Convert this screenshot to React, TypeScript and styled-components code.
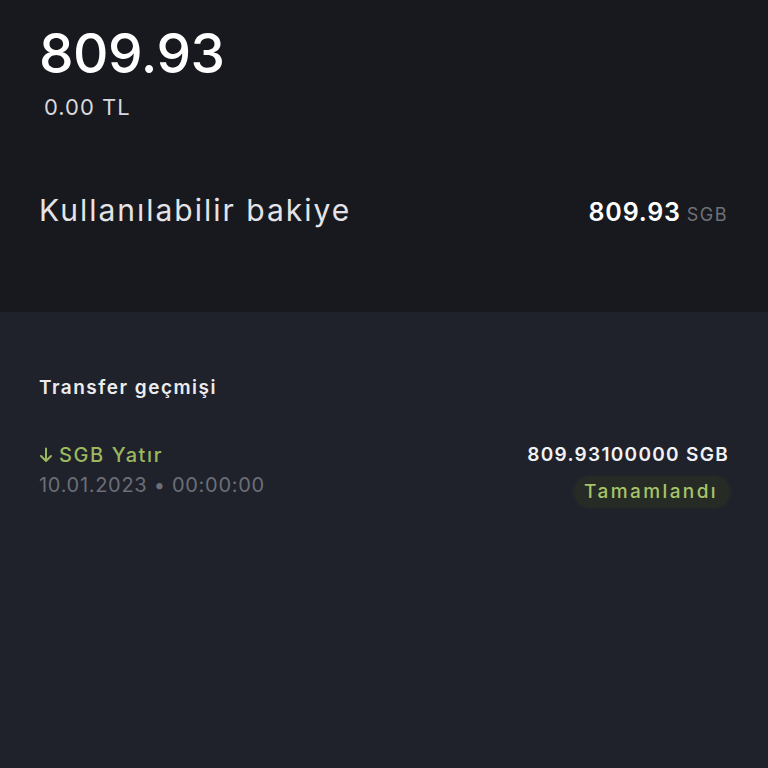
import React from 'react';
import styled, { createGlobalStyle } from 'styled-components';

const Global = createGlobalStyle`
  html, body {
    margin: 0;
    padding: 0;
    background: #1f222b;
  }
  body {
    font-family: Inter, "Noto Sans", sans-serif;
    -webkit-font-smoothing: antialiased;
  }
`;

const Page = styled.div`
  width: 768px;
  height: 768px;
  display: flex;
  flex-direction: column;
  overflow: hidden;
`;

const Header = styled.div`
  height: 312px;
  background: #18191e;
  padding: 0 40px 0 39px;
  box-sizing: border-box;
  display: flex;
  flex-direction: column;
`;

const Total = styled.div`
  margin-top: 22px;
  font-size: 55px;
  font-weight: 500;
  color: #ffffff;
  line-height: 62px;
  letter-spacing: -0.5px;
`;

const Fiat = styled.div`
  margin: 10px 0 0 5px;
  font-size: 22px;
  color: #d8d8dc;
  line-height: 26px;
  letter-spacing: 1px;
`;

const BalanceRow = styled.div`
  margin-top: 72px;
  display: flex;
  justify-content: space-between;
  align-items: baseline;
  line-height: 36px;
`;

const BalanceLabel = styled.span`
  font-size: 30px;
  color: #e4e4e8;
  letter-spacing: 2px;
`;

const BalanceValue = styled.span`
  font-size: 25px;
  font-weight: 600;
  color: #ffffff;
  letter-spacing: 0.8px;
`;

const Unit = styled.span`
  margin-left: 6px;
  font-size: 18px;
  font-weight: 400;
  color: #6f7178;
  letter-spacing: 1.5px;
`;

const History = styled.div`
  flex: 1;
  padding: 0 40px 0 39px;
  display: flex;
  flex-direction: column;
`;

const SectionTitle = styled.div`
  margin-top: 64px;
  font-size: 19px;
  font-weight: 600;
  color: #ececef;
  letter-spacing: 1.5px;
  line-height: 24px;
`;

const TxRow = styled.div`
  margin-top: 42px;
  display: flex;
  justify-content: space-between;
`;

const Col = styled.div<{ $right?: boolean }>`
  display: flex;
  flex-direction: column;
  align-items: ${(p) => (p.$right ? 'flex-end' : 'flex-start')};
`;

const TxType = styled.div`
  font-size: 20px;
  font-weight: 500;
  color: #9cb85f;
  line-height: 26px;
  letter-spacing: 1.6px;
  display: flex;
  align-items: center;
  gap: 6px;
`;

const TxDate = styled.div`
  margin-top: 4px;
  font-size: 20px;
  color: #6b6e76;
  line-height: 26px;
  letter-spacing: 0.7px;
`;

const TxAmount = styled.div`
  font-size: 19px;
  font-weight: 600;
  color: #f2f2f4;
  line-height: 26px;
  letter-spacing: 1.3px;
  margin-right: -1px;
`;

const Badge = styled.div`
  margin: 8px -2px 0 0;
  padding: 3px 12px 3px 10px;
  border-radius: 16px;
  background: #272b25;
  box-shadow: 0 0 6px rgba(120, 150, 70, 0.08);
  font-size: 19px;
  font-weight: 500;
  color: #a6c36a;
  line-height: 26px;
  letter-spacing: 2.4px;
`;

const ArrowDown = () => (
  <svg width="14" height="16" viewBox="0 0 14 16" fill="none">
    <path d="M7 1.5v12.5M2 9l5 5 5-5" stroke="#9cb85f" strokeWidth="2" strokeLinecap="round" strokeLinejoin="round" />
  </svg>
);

const App: React.FC = () => (
  <Page>
    <Global />
    <Header>
      <Total>809.93</Total>
      <Fiat>0.00 TL</Fiat>
      <BalanceRow>
        <BalanceLabel>Kullanılabilir bakiye</BalanceLabel>
        <BalanceValue>
          809.93
          <Unit>SGB</Unit>
        </BalanceValue>
      </BalanceRow>
    </Header>
    <History>
      <SectionTitle>Transfer geçmişi</SectionTitle>
      <TxRow>
        <Col>
          <TxType>
            <ArrowDown />
            SGB Yatır
          </TxType>
          <TxDate>10.01.2023 • 00:00:00</TxDate>
        </Col>
        <Col $right>
          <TxAmount>809.93100000 SGB</TxAmount>
          <Badge>Tamamlandı</Badge>
        </Col>
      </TxRow>
    </History>
  </Page>
);

export default App;
